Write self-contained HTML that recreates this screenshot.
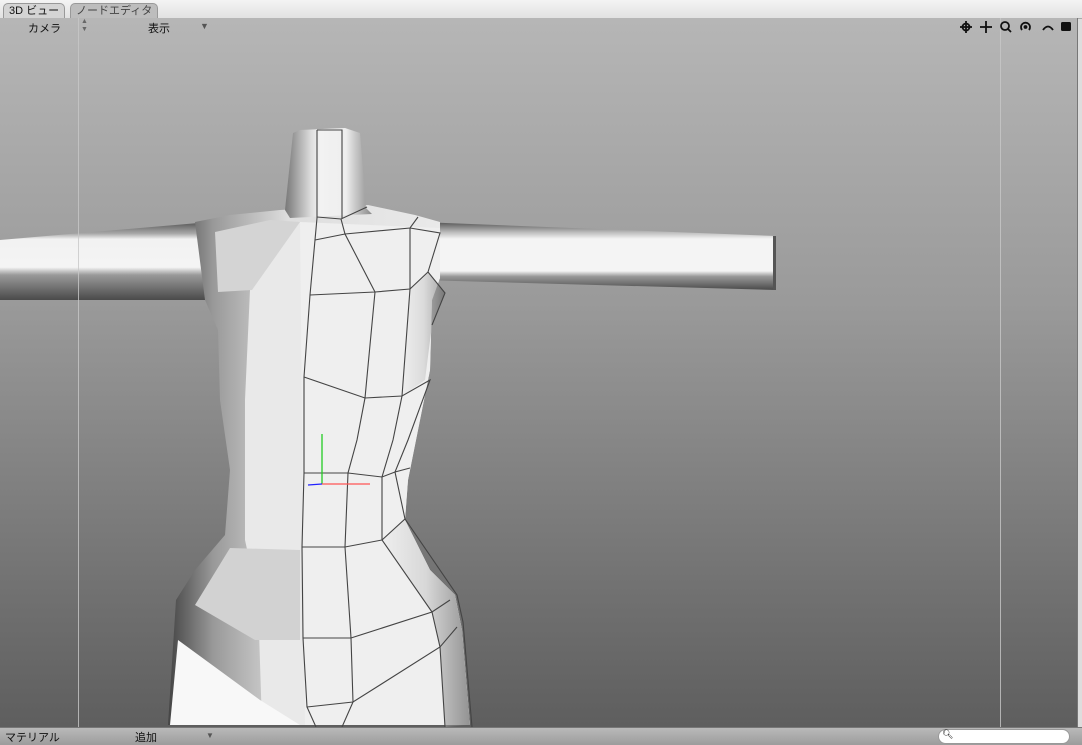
<!DOCTYPE html>
<html><head><meta charset="utf-8"><style>
body{margin:0;width:1082px;height:744px;overflow:hidden;font-family:"Liberation Sans","Noto Sans CJK JP",sans-serif;background:#ddd;position:relative}
#top{position:absolute;left:0;top:0;width:1082px;height:18px;background:linear-gradient(#f4f4f4,#e2e2e2);border-bottom:1px solid #aaa}
.tab{position:absolute;top:3px;height:15px;border:1px solid #999;border-bottom:none;border-radius:5px 5px 0 0;font-size:11px;line-height:15px;padding:0 5px}
#vp{position:absolute;left:0;top:18px;width:1077px;height:709px;background:linear-gradient(#b6b6b6 0%,#9a9a9a 40%,#5e5e5e 100%)}
#bot{position:absolute;left:0;top:727px;width:1082px;height:17px;background:linear-gradient(#b9b9b9,#9c9c9c);border-top:1px solid #777;font-size:11px}
.t{position:absolute;font-size:11px;color:#111}
</style></head><body>
<div id="top">
<div class="tab" style="left:3px;background:#d4d4d4;color:#111">3D ビュー</div>
<div class="tab" style="left:70px;background:#bdbdbd;color:#444">ノードエディタ</div>
</div>
<div id="vp">
<svg width="1077" height="709" viewBox="0 18 1077 709" style="position:absolute;left:0;top:0">
<defs>
<linearGradient id="la" x1="0" y1="0" x2="0" y2="1"><stop offset="0" stop-color="#555"/><stop offset=".15" stop-color="#aaa"/><stop offset=".22" stop-color="#f2f2f2"/><stop offset=".58" stop-color="#f4f4f4"/><stop offset=".68" stop-color="#999"/><stop offset="1" stop-color="#4a4a4a"/></linearGradient>
<linearGradient id="ra" x1="0" y1="0" x2="0" y2="1"><stop offset="0" stop-color="#555"/><stop offset=".15" stop-color="#bbb"/><stop offset=".25" stop-color="#f4f4f4"/><stop offset=".72" stop-color="#f4f4f4"/><stop offset=".8" stop-color="#999"/><stop offset="1" stop-color="#4a4a4a"/></linearGradient>
<linearGradient id="lt" x1="0" y1="0" x2="1" y2="0"><stop offset="0" stop-color="#444"/><stop offset=".15" stop-color="#999"/><stop offset=".4" stop-color="#dedede"/><stop offset="1" stop-color="#ececec"/></linearGradient>
<linearGradient id="rt" x1="0" y1="0" x2="1" y2="0"><stop offset="0" stop-color="#eee"/><stop offset=".5" stop-color="#c8c8c8"/><stop offset="1" stop-color="#555"/></linearGradient>
<linearGradient id="nk" x1="0" y1="0" x2="1" y2="0"><stop offset="0" stop-color="#777"/><stop offset=".3" stop-color="#ddd"/><stop offset=".4" stop-color="#f2f2f2"/><stop offset=".7" stop-color="#eee"/><stop offset="1" stop-color="#888"/></linearGradient>
</defs>
<polygon points="0,240 210,222 225,300 0,300" fill="url(#la)"/>
<polygon points="420,222 776,236 776,290 420,280" fill="url(#ra)"/>
<rect x="773" y="236" width="3" height="54" fill="#555"/>
<polygon points="195,222 230,215 280,210 368,205 415,215 440,222 440,278 432,300 430,370 420,420 408,480 405,520 430,570 455,595 462,630 470,725 168,725 176,600 195,570 225,535 230,470 220,400 218,330 205,300" fill="url(#lt)"/>
<polygon points="300,222 440,228 440,278 432,300 430,370 420,420 408,480 405,520 430,570 455,595 462,630 470,725 300,725" fill="#efefef"/>
<polygon points="405,520 430,570 455,595 462,630 470,725 445,727 440,647 432,612 382,540" fill="url(#rt)" opacity=".6"/>
<polygon points="410,289 428,272 445,293 432,325 425,380 402,396" fill="url(#rt)" opacity=".5"/>
<polygon points="250,290 300,222 305,725 262,725 258,600 245,540 245,400" fill="#e9e9e9"/>
<polygon points="215,232 270,220 300,222 252,290 218,292" fill="#d4d4d4"/>
<polygon points="195,605 230,548 300,550 300,640 255,640" fill="#d2d2d2"/>
<polygon points="178,640 260,700 300,725 170,725" fill="#f8f8f8"/>
<polygon points="293,133 300,130 345,128 360,133 366,208 372,214 290,218 285,210" fill="url(#nk)"/>
<g stroke="#444" stroke-width="1.1" fill="none">
<polyline points="317,130 317,218 310,295 304,377 304,473 302,547 303,638 307,707 316,727"/>
<polyline points="317,130 342,130 342,218"/>
<polyline points="317,217 341,219 367,207"/>
<polyline points="315,240 345,234 410,228 418,217"/>
<polyline points="341,219 345,234 375,292 365,398 357,440 348,473 345,547 351,638 353,702 342,727"/>
<polyline points="410,228 440,233 428,272 410,289 402,396 393,440 382,477 382,540 432,612 440,647 445,727"/>
<polyline points="310,295 375,292 410,289"/>
<polyline points="410,228 410,289"/>
<polyline points="428,272 445,293 432,325"/>
<polyline points="304,377 365,398 402,396 430,380 408,440 395,472 405,519"/>
<polyline points="304,473 348,473 382,477 395,472 410,468"/>
<polyline points="302,547 345,547 382,540 405,519 457,595 463,622 472,727"/>
<polyline points="303,638 351,638 432,612 450,600"/>
<polyline points="307,707 353,702 440,647 457,627"/>
</g>
<line x1="322" y1="434" x2="322" y2="484" stroke="#2c2" stroke-width="1.3"/>
<line x1="322" y1="484" x2="370" y2="484" stroke="#f55" stroke-width="1.3"/>
<line x1="322" y1="484" x2="308" y2="485" stroke="#22f" stroke-width="1.3"/>
<line x1="78.5" y1="18" x2="78.5" y2="727" stroke="#c8c8c8" stroke-width="1" opacity=".8"/>
<line x1="1000.5" y1="18" x2="1000.5" y2="727" stroke="#c8c8c8" stroke-width="1" opacity=".8"/>
</svg>
<div class="t" style="left:28px;top:2px">カメラ</div>
<div class="t" style="left:81px;top:0px;font-size:7px;color:#666;line-height:8px">▲<br>▼</div>
<div class="t" style="left:148px;top:2px">表示</div>
<div class="t" style="left:200px;top:3px;font-size:9px;color:#555">▼</div>
<svg width="120" height="18" style="position:absolute;left:955px;top:0">
<g fill="none" stroke="#111" stroke-width="1.8">
<circle cx="11" cy="9" r="3.5"/><line x1="11" y1="3" x2="11" y2="15"/><line x1="5" y1="9" x2="17" y2="9"/>
<line x1="31" y1="3" x2="31" y2="15"/><line x1="25" y1="9" x2="37" y2="9"/>
<circle cx="50" cy="8" r="4"/><line x1="53" y1="11" x2="56" y2="14"/>
<path d="M67 12 A4.5 4.5 0 1 1 74 12"/><circle cx="70.5" cy="9" r="1" fill="#111"/>
<path d="M88 12 Q93 5 98 12"/>
</g>
<rect x="106" y="4" width="10" height="9" rx="1.5" fill="#111"/>
</svg>
</div>
<div style="position:absolute;left:1077px;top:18px;width:1px;height:709px;background:#777"></div>
<div id="bot">
<div class="t" style="left:5px;top:1px">マテリアル</div>
<div class="t" style="left:135px;top:1px">追加</div>
<div class="t" style="left:206px;top:3px;font-size:8px;color:#555">▼</div>
<div style="position:absolute;left:938px;top:1px;width:130px;height:13px;background:#fff;border:1px solid #999;border-radius:8px"><span style="position:absolute;left:3px;top:-1px;font-size:9px">🔍︎</span></div>
</div>
</body></html>
